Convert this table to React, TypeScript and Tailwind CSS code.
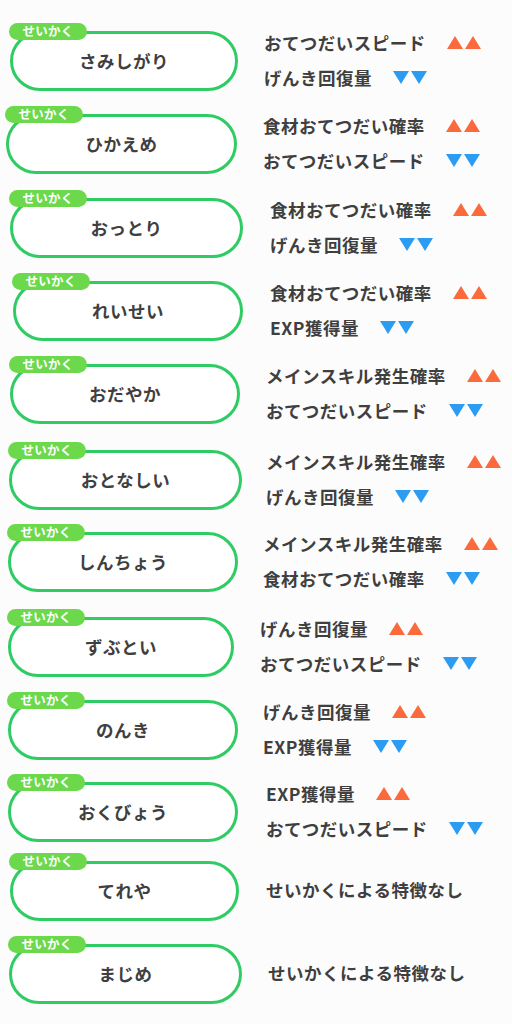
import React from "react";

type Effect = { label: string; dir: "up" | "down" };
type Row = {
  name: string;
  mt: string;
  ml: string;
  w: string;
  gap: string;
  effects: Effect[] | null;
};

const rows: Row[] = [
  { name: "さみしがり", mt: "mt-[23px]", ml: "ml-[10px]", w: "w-[228px]", gap: "ml-[26px]", effects: [{ label: "おてつだいスピード", dir: "up" }, { label: "げんき回復量", dir: "down" }] },
  { name: "ひかえめ", mt: "mt-[15px]", ml: "ml-[6px]", w: "w-[231px]", gap: "ml-[26px]", effects: [{ label: "食材おてつだい確率", dir: "up" }, { label: "おてつだいスピード", dir: "down" }] },
  { name: "おっとり", mt: "mt-[16px]", ml: "ml-[10px]", w: "w-[233px]", gap: "ml-[27px]", effects: [{ label: "食材おてつだい確率", dir: "up" }, { label: "げんき回復量", dir: "down" }] },
  { name: "れいせい", mt: "mt-[15px]", ml: "ml-[13px]", w: "w-[230px]", gap: "ml-[27px]", effects: [{ label: "食材おてつだい確率", dir: "up" }, { label: "EXP獲得量", dir: "down" }] },
  { name: "おだやか", mt: "mt-[15px]", ml: "ml-[10px]", w: "w-[230px]", gap: "ml-[26px]", effects: [{ label: "メインスキル発生確率", dir: "up" }, { label: "おてつだいスピード", dir: "down" }] },
  { name: "おとなしい", mt: "mt-[18px]", ml: "ml-[9px]", w: "w-[233px]", gap: "ml-[24px]", effects: [{ label: "メインスキル発生確率", dir: "up" }, { label: "げんき回復量", dir: "down" }] },
  { name: "しんちょう", mt: "mt-[14px]", ml: "ml-[8px]", w: "w-[230px]", gap: "ml-[25px]", effects: [{ label: "メインスキル発生確率", dir: "up" }, { label: "食材おてつだい確率", dir: "down" }] },
  { name: "ずぶとい", mt: "mt-[17px]", ml: "ml-[8px]", w: "w-[226px]", gap: "ml-[26px]", effects: [{ label: "げんき回復量", dir: "up" }, { label: "おてつだいスピード", dir: "down" }] },
  { name: "のんき", mt: "mt-[15px]", ml: "ml-[8px]", w: "w-[230px]", gap: "ml-[25px]", effects: [{ label: "げんき回復量", dir: "up" }, { label: "EXP獲得量", dir: "down" }] },
  { name: "おくびょう", mt: "mt-[14px]", ml: "ml-[8px]", w: "w-[230px]", gap: "ml-[28px]", effects: [{ label: "EXP獲得量", dir: "up" }, { label: "おてつだいスピード", dir: "down" }] },
  { name: "てれや", mt: "mt-[11px]", ml: "ml-[10px]", w: "w-[229px]", gap: "ml-[27px]", effects: null },
  { name: "まじめ", mt: "mt-[15px]", ml: "ml-[9px]", w: "w-[233px]", gap: "ml-[26px]", effects: null },
];

function Tri({ dir }: { dir: "up" | "down" }) {
  const color = dir === "up" ? "#fb6a3b" : "#2b9cf2";
  return (
    <svg width="16" height="13" viewBox="0 0 16 13" className="block">
      {dir === "up" ? (
        <polygon points="8,0 16,13 0,13" fill={color} />
      ) : (
        <polygon points="0,0 16,0 8,13" fill={color} />
      )}
    </svg>
  );
}

function EffectLine({ e }: { e: Effect }) {
  return (
    <div className="flex h-[35px] items-center">
      <span className="text-[17.5px] font-bold tracking-[0.5px] text-[#3f3f3f] leading-none">{e.label}</span>
      <div className="ml-[21px] flex gap-[2px]">
        <Tri dir={e.dir} />
        <Tri dir={e.dir} />
      </div>
    </div>
  );
}

function RowView({ r }: { r: Row }) {
  return (
    <div className={`flex h-[68px] items-center ${r.mt}`}>
      <div className={`relative shrink-0 pt-[8px] ${r.ml}`}>
        <div className="absolute left-[-1px] top-0 z-10 flex h-[17px] w-[78px] items-center justify-center rounded-full bg-[#6bd94b]">
          <span className="text-[12.5px] font-bold leading-none tracking-[0.3px] text-white">せいかく</span>
        </div>
        <div className={`flex h-[60px] items-center justify-center rounded-full border-[3px] border-[#2fcb63] bg-white ${r.w}`}>
          <span className="text-[17.5px] font-bold tracking-[0.5px] text-[#3f3f3f] leading-none">{r.name}</span>
        </div>
      </div>
      <div className={`mt-[6px] flex flex-col ${r.gap}`}>
        {r.effects ? (
          r.effects.map((e, i) => <EffectLine key={i} e={e} />)
        ) : (
          <div className="flex h-[35px] items-center">
            <span className="text-[17.5px] font-bold tracking-[0.5px] text-[#3f3f3f] leading-none">せいかくによる特徴なし</span>
          </div>
        )}
      </div>
    </div>
  );
}

export default function App() {
  return (
    <div
      className="flex h-[1024px] w-[512px] flex-col overflow-hidden bg-[#fcfcfc]"
      style={{ fontFamily: '"Noto Sans CJK JP", "Noto Sans", sans-serif' }}
    >
      {rows.map((r, i) => (
        <RowView key={i} r={r} />
      ))}
    </div>
  );
}
